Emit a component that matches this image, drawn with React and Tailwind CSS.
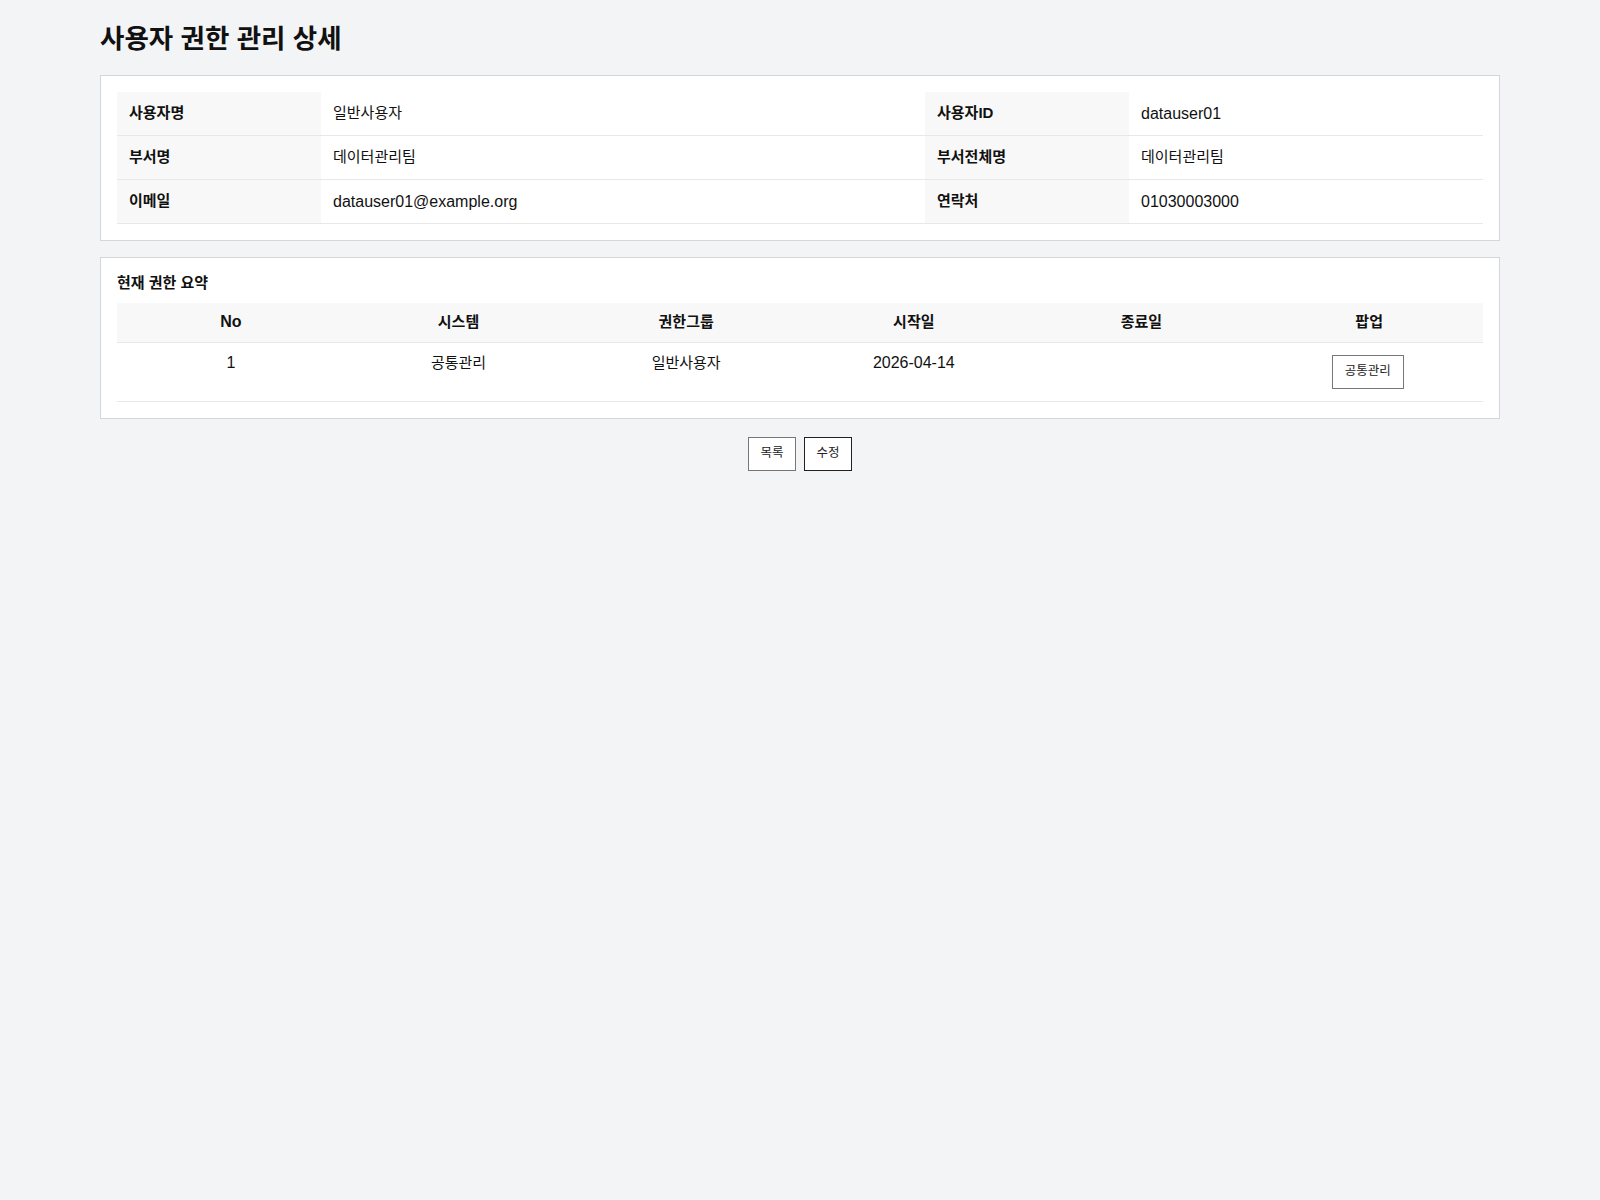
import React from 'react'

const font = { fontFamily: '"Liberation Sans", "Noto Sans CJK KR", sans-serif' }

const infoRows = [
  [
    { label: '사용자명', value: '일반사용자', ko: true },
    { label: '사용자ID', value: 'datauser01' },
  ],
  [
    { label: '부서명', value: '데이터관리팀', ko: true },
    { label: '부서전체명', value: '데이터관리팀', ko: true },
  ],
  [
    { label: '이메일', value: 'datauser01@example.org' },
    { label: '연락처', value: '01030003000' },
  ],
]

const headers = [
  { text: 'No', ko: false },
  { text: '시스템', ko: true },
  { text: '권한그룹', ko: true },
  { text: '시작일', ko: true },
  { text: '종료일', ko: true },
  { text: '팝업', ko: true },
]

const Label = ({ children, width }) => (
  <div className={`${width} shrink-0 h-full flex items-center px-3 bg-[#f8f8f8] font-bold text-[15px]`}>
    {children}
  </div>
)

const Value = ({ children, width, ko }) => (
  <div className={`${width} h-full flex items-center px-3 ${ko ? 'text-[15px]' : 'text-[16px]'}`}>
    {children}
  </div>
)

const App = () => {
  return (
    <div className="min-h-screen bg-[#f3f4f6] text-[#111]" style={font}>
      <div className="w-[1400px] mx-auto pt-[20px]">
        {/* Page title */}
        <h1 className="text-[26.5px] leading-[38px] font-bold mb-[17px]">사용자 권한 관리 상세</h1>

        {/* User info */}
        <div className="bg-white border border-[#d4d6da] p-4">
          {infoRows.map((row, i) => (
            <div key={i} className="flex h-[44px] border-b border-[#e8e8e8]">
              <Label width="w-[204px]">{row[0].label}</Label>
              <Value width="w-[604px]" ko={row[0].ko}>{row[0].value}</Value>
              <Label width="w-[204px]">{row[1].label}</Label>
              <Value width="flex-1" ko={row[1].ko}>{row[1].value}</Value>
            </div>
          ))}
        </div>

        {/* Current permission summary */}
        <div className="bg-white border border-[#d4d6da] p-4 mt-4">
          <h2 className="text-[15px] leading-[18px] font-bold mb-[11px]">현재 권한 요약</h2>
          <table className="w-full table-fixed border-collapse">
            <thead>
              <tr className="bg-[#f8f8f8] border-b border-[#e8e8e8]">
                {headers.map((h) => (
                  <th
                    key={h.text}
                    className={`h-[39px] p-0 align-middle text-center font-bold ${h.ko ? 'text-[15px]' : 'text-[16px]'}`}
                  >
                    {h.text}
                  </th>
                ))}
              </tr>
            </thead>
            <tbody>
              <tr className="border-b border-[#e8e8e8]">
                <td className="align-top text-center pt-3 pb-3 text-[16px] leading-[16px]">1</td>
                <td className="align-top text-center pt-3 pb-3 text-[15px] leading-[16px]">공통관리</td>
                <td className="align-top text-center pt-3 pb-3 text-[15px] leading-[16px]">일반사용자</td>
                <td className="align-top text-center pt-3 pb-3 text-[16px] leading-[16px]">2026-04-14</td>
                <td className="align-top text-center pt-3 pb-3"></td>
                <td className="align-top text-center pt-3 pb-3">
                  <button className="w-[72px] h-[34px] mr-[3px] bg-white border border-[#777] text-[12.5px] text-[#222]">
                    공통관리
                  </button>
                </td>
              </tr>
            </tbody>
          </table>
        </div>

        {/* Actions */}
        <div className="flex justify-center gap-2 mt-[18px]">
          <button className="w-12 h-[34px] bg-white border border-[#777] text-[12.5px] text-[#222]">목록</button>
          <button className="w-12 h-[34px] bg-white border border-[#222] text-[12.5px] text-[#222]">수정</button>
        </div>
      </div>
    </div>
  )
}

export default App
